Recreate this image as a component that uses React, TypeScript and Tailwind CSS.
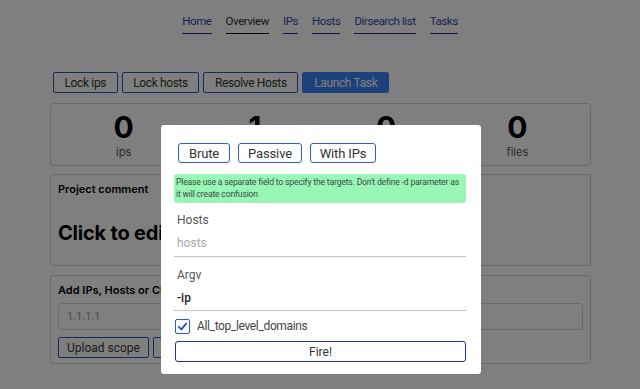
import { useState } from "react";

const NAV = [
  { label: "Home", active: false },
  { label: "Overview", active: true },
  { label: "IPs", active: false },
  { label: "Hosts", active: false },
  { label: "Dirsearch list", active: false },
  { label: "Tasks", active: false },
];

const STATS = [
  { value: "0", label: "ips" },
  { value: "1", label: "hosts" },
  { value: "0", label: "urls" },
  { value: "0", label: "files" },
];

export default function App() {
  const [allTld, setAllTld] = useState(true);

  return (
    <div className="relative h-[389px] w-[640px] overflow-hidden bg-white font-['Roboto',sans-serif]">
      {/* page behind the dialog */}
      <nav className="flex justify-center gap-[14px] pt-[13px] text-[11.5px] tracking-[-0.035em]">
        {NAV.map((item) => (
          <a
            key={item.label}
            className={
              item.active
                ? "border-b border-black pb-[3px] text-[#2a2a2a]"
                : "border-b border-[#1e2a8a] pb-[3px] text-[#3345a8]"
            }
          >
            {item.label}
          </a>
        ))}
      </nav>

      <div className="ml-[50px] w-[541px] pt-[38px]">
        <div className="ml-[3px] flex gap-[4px] text-[12px] tracking-[-0.03em]">
          <PageButton>Lock ips</PageButton>
          <PageButton>Lock hosts</PageButton>
          <PageButton>Resolve Hosts</PageButton>
          <button className="h-[21px] w-[87px] rounded-[2px] border border-[#3b82f6] bg-[#3b82f6] text-white">
            Launch Task
          </button>
        </div>

        <div className="mt-[10px] grid h-[63px] grid-cols-4 rounded-[3px] border border-[#d4d4d4] px-[7px] font-['Inter',sans-serif]">
          {STATS.map((s, i) => (
            <div key={i} className="flex flex-col items-center pt-[7px]">
              <span className="text-[30px] leading-[32px] font-bold text-black">
                {s.value}
              </span>
              <span className="mt-[1px] text-[11px] leading-[16px] text-[#555]">
                {s.label}
              </span>
            </div>
          ))}
        </div>

        <div className="mt-[8px] h-[92px] rounded-[3px] border border-[#d4d4d4] px-[7px] pt-[7px] font-['Inter',sans-serif]">
          <p className="text-[11px] leading-[14px] font-semibold text-black">
            Project comment
          </p>
          <p className="mt-[24px] text-[20px] leading-[26px] font-bold tracking-[-0.01em] text-black">
            Click to edit
          </p>
        </div>

        <div className="mt-[9px] h-[89px] rounded-[3px] border border-[#d4d4d4] px-[7px] pt-[7px]">
          <p className="font-['Inter',sans-serif] text-[11px] leading-[14px] font-semibold text-black">
            Add IPs, Hosts or CIDR scope
          </p>
          <div className="mt-[6px] flex h-[27px] items-center rounded-[3px] border border-[#d4d4d4] px-[8px] text-[11px] text-[#999]">
            1.1.1.1
          </div>
          <div className="mt-[7px] flex gap-[4px] text-[12px]">
            <PageButton wide>Upload scope</PageButton>
            <PageButton wide>Add to scope</PageButton>
          </div>
        </div>
      </div>

      {/* overlay */}
      <div className="absolute inset-0 bg-black/50" />

      {/* dialog */}
      <div className="absolute top-[125px] left-[161px] h-[249px] w-[320px] rounded-[3px] bg-white pt-[18px] pr-[15px] pl-[13px]">
        <div className="ml-[4px] flex gap-[8px] text-[13px] tracking-[-0.01em] text-[#333]">
          <ModeButton w="w-[52px]">Brute</ModeButton>
          <ModeButton w="w-[64px]">Passive</ModeButton>
          <ModeButton w="w-[66px]">With IPs</ModeButton>
        </div>

        <div className="mt-[11px] h-[29px] rounded-[3px] bg-[#98f7b6] px-[2px] pt-[2px] text-[8.6px] leading-[12px] tracking-[-0.02em] whitespace-nowrap text-[#3d4a42]">
          Please use a separate field to specify the targets. Don't define -d parameter as
          <br />
          it will create confusion
        </div>

        <div className="mt-[9px] border-b border-[#c4c4c4] px-[3px] pb-[5px]">
          <p className="text-[12px] leading-[16px] text-[#555]">Hosts</p>
          <p className="mt-[7px] text-[12px] leading-[16px] text-[#aaa]">hosts</p>
        </div>

        <div className="mt-[10px] border-b border-[#c4c4c4] px-[3px] pb-[4px]">
          <p className="text-[12px] leading-[16px] text-[#555]">Argv</p>
          <p className="mt-[7px] text-[12px] leading-[16px] font-medium text-[#222]">-ip</p>
        </div>

        <label className="mt-[6px] ml-[1px] flex items-center gap-[7px] text-[12px] tracking-[-0.03em] text-[#444]">
          <span
            onClick={() => setAllTld(!allTld)}
            className="flex h-[15px] w-[15px] items-center justify-center rounded-[2px] border border-[#2b59c3] bg-white"
          >
            {allTld && (
              <svg viewBox="0 0 12 12" className="h-[11px] w-[11px]">
                <path
                  d="M2 6.5 L4.8 9.2 L10 2.8"
                  fill="none"
                  stroke="#1d4fd0"
                  strokeWidth="2"
                  strokeLinecap="round"
                  strokeLinejoin="round"
                />
              </svg>
            )}
          </span>
          All_top_level_domains
        </label>

        <button className="mt-[6px] ml-[1px] h-[21px] w-[291px] rounded-[3px] border-[1.5px] border-[#1c2fa8] text-[12px] text-[#333]">
          Fire!
        </button>
      </div>
    </div>
  );
}

function PageButton({ children, wide }: { children: React.ReactNode; wide?: boolean }) {
  return (
    <button
      className={`h-[21px] rounded-[2px] border border-[#3050b8] text-[#333] ${
        wide ? "w-[91px]" : "px-[10.5px]"
      }`}
    >
      {children}
    </button>
  );
}

function ModeButton({ children, w }: { children: React.ReactNode; w: string }) {
  return (
    <button className={`h-[20px] ${w} rounded-[3px] border-[1.5px] border-[#2d5bd0] bg-white`}>
      {children}
    </button>
  );
}
